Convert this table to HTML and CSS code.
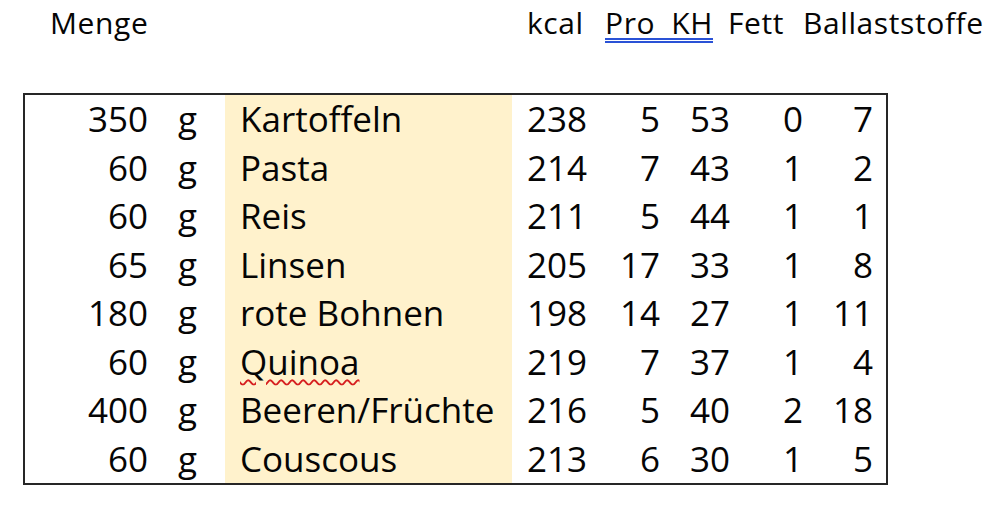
FILE: index.html
```html
<!DOCTYPE html>
<html lang="de">
<head>
<meta charset="utf-8">
<title>Nährwerte</title>
<link rel="stylesheet" href="styles.css">
</head>
<body>
<div class="page">
  <div class="head">
    <span class="h-menge">Menge</span>
    <span class="h-kcal">kcal</span>
    <span class="h-prokh"><span>Pro</span><span>KH</span></span>
    <span class="h-fett">Fett</span>
    <span class="h-ball">Ballaststoffe</span>
  </div>
  <div class="table">
    <div class="c num">350</div><div class="c unit">g</div><div class="c name">Kartoffeln</div><div class="c num">238</div><div class="c num">5</div><div class="c num">53</div><div class="c num">0</div><div class="c num last">7</div>
    <div class="c num">60</div><div class="c unit">g</div><div class="c name">Pasta</div><div class="c num">214</div><div class="c num">7</div><div class="c num">43</div><div class="c num">1</div><div class="c num last">2</div>
    <div class="c num">60</div><div class="c unit">g</div><div class="c name">Reis</div><div class="c num">211</div><div class="c num">5</div><div class="c num">44</div><div class="c num">1</div><div class="c num last">1</div>
    <div class="c num">65</div><div class="c unit">g</div><div class="c name">Linsen</div><div class="c num">205</div><div class="c num">17</div><div class="c num">33</div><div class="c num">1</div><div class="c num last">8</div>
    <div class="c num">180</div><div class="c unit">g</div><div class="c name">rote Bohnen</div><div class="c num">198</div><div class="c num">14</div><div class="c num">27</div><div class="c num">1</div><div class="c num last">11</div>
    <div class="c num">60</div><div class="c unit">g</div><div class="c name"><span class="spell">Quinoa</span></div><div class="c num">219</div><div class="c num">7</div><div class="c num">37</div><div class="c num">1</div><div class="c num last">4</div>
    <div class="c num">400</div><div class="c unit">g</div><div class="c name">Beeren/Früchte</div><div class="c num">216</div><div class="c num">5</div><div class="c num">40</div><div class="c num">2</div><div class="c num last">18</div>
    <div class="c num">60</div><div class="c unit">g</div><div class="c name">Couscous</div><div class="c num">213</div><div class="c num">6</div><div class="c num">30</div><div class="c num">1</div><div class="c num last">5</div>
  </div>
</div>
</body>
</html>
```

FILE: styles.css
```css
html, body {
  margin: 0;
  padding: 0;
  background: #ffffff;
}

.page {
  font-family: "Open Sans", "Lato", sans-serif;
  font-size: 35px;
  color: #050505;
  width: 994px;
  height: 525px;
  overflow: hidden;
}

.head {
  display: grid;
  grid-template-columns: 527px 78px 123px 75px auto;
  padding-top: 2px;
  height: 41px;
  font-size: 30px;
  line-height: 41px;
  letter-spacing: 0.6px;
  white-space: nowrap;
}

.h-menge {
  padding-left: 50px;
}

.h-prokh {
  display: flex;
  align-self: start;
  height: 41px;
  width: 108px;
  justify-content: space-between;
  border-bottom: 5px double #2a52d6;
  box-sizing: border-box;
}

.h-prokh span {
  display: block;
}

.table {
  margin-top: 50px;
  margin-left: 23px;
  width: 865px;
  box-sizing: border-box;
  border: 2px solid #262626;
  display: grid;
  grid-template-columns: 123px 77px 287px 75px 73px 70px 73px 70px 1fr;
  grid-auto-rows: 48.5px;
  line-height: 48.5px;
  white-space: nowrap;
}

.c {
  text-align: right;
}

.num.last {
  grid-column: 8;
}

.table > .c:nth-child(8n+1) {
  grid-column: 1;
}

.unit {
  text-align: left;
  padding-left: 30px;
}

.name {
  text-align: left;
  padding-left: 15px;
  background: #fff2cc;
}

.spell {
  text-decoration: underline wavy #d61f1f;
  text-decoration-thickness: 1.5px;
  text-underline-offset: 4px;
}
```
